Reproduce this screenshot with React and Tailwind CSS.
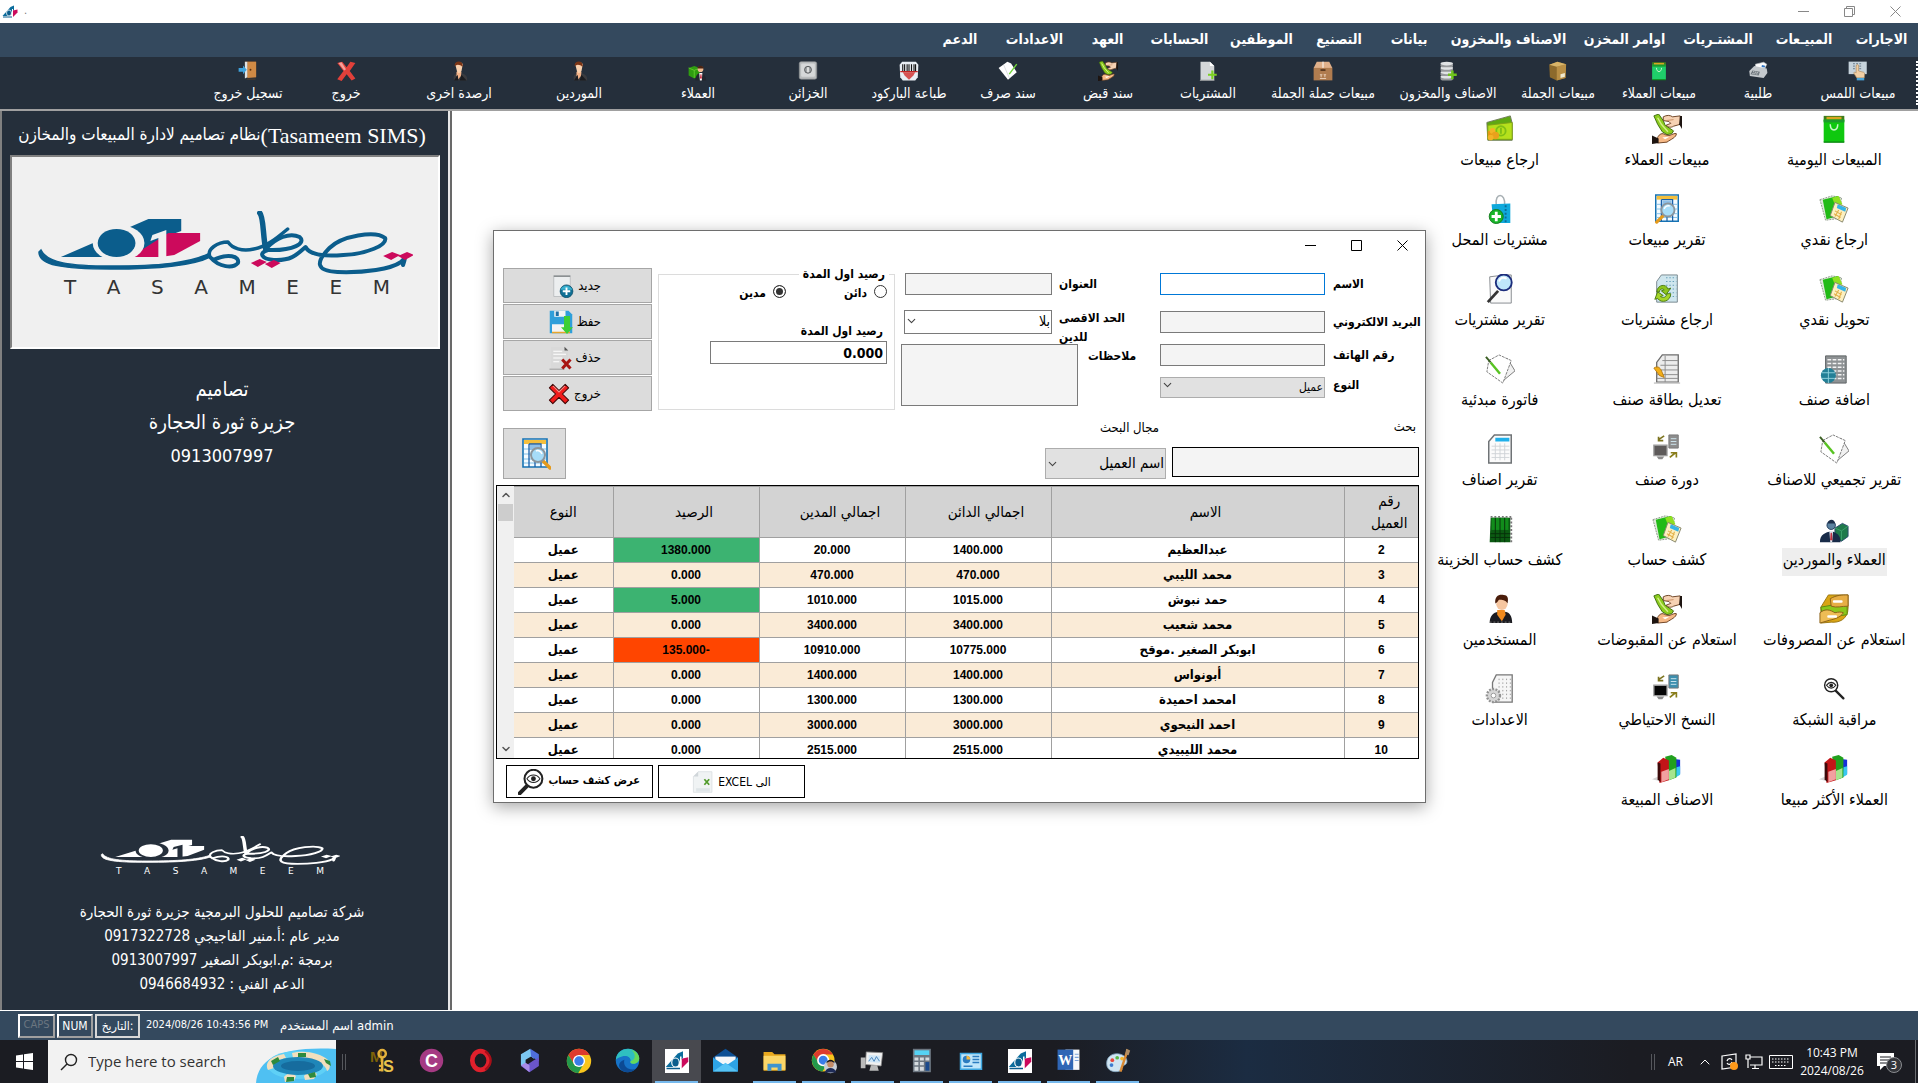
import React, { useState } from 'react';
import { ChevronDown, ChevronUp } from 'lucide-react';

const MENU = [
  { label: 'الاجارات', width: 'w-[73px]' },
  { label: 'المبيـعات', width: 'w-[82px]' },
  { label: 'المشتـريات', width: 'w-[90px]' },
  { label: 'اوامر المخزن', width: 'w-[97px]' },
  { label: 'الاصناف والمخزون', width: 'w-[135px]' },
  { label: 'بيانات', width: 'w-[64px]' },
  { label: 'التصنيع', width: 'w-[76px]' },
  { label: 'الموظفين', width: 'w-[79px]' },
  { label: 'الحسابات', width: 'w-[85px]' },
  { label: 'العهد', width: 'w-[59px]' },
  { label: 'الاعدادات', width: 'w-[87px]' },
  { label: 'الدعم', width: 'w-[62px]' },
];

const CUSTOMERS = [
  { id: 2, name: 'عبدالعظيم', credit: '1400.000', debit: '20.000', balance: '1380.000' },
  { id: 3, name: 'محمد الليبي', credit: '470.000', debit: '470.000', balance: '0.000' },
  { id: 4, name: 'حمد نبوش', credit: '1015.000', debit: '1010.000', balance: '5.000' },
  { id: 5, name: 'محمد شعيب', credit: '3400.000', debit: '3400.000', balance: '0.000' },
  { id: 6, name: 'ابوبكر الصغير .موقح', credit: '10775.000', debit: '10910.000', balance: '-135.000' },
  { id: 7, name: 'أبونواس', credit: '1400.000', debit: '1400.000', balance: '0.000' },
  { id: 8, name: 'امحمد احميدة', credit: '1300.000', debit: '1300.000', balance: '0.000' },
  { id: 9, name: 'احمد النيحوي', credit: '3000.000', debit: '3000.000', balance: '0.000' },
  { id: 10, name: 'محمد الليبيدي', credit: '2515.000', debit: '2515.000', balance: '0.000' },
];

/* ---------- icons ---------- */

const Svg = ({ size = 30, children }) => (
  <svg width={size} height={size} viewBox="0 0 32 32" aria-hidden="true" className="shrink-0">{children}</svg>
);

const Bag = ({ size, color = '#0fc80f' }) => (
  <Svg size={size}>
    <path d="M5 2h22v6H5z" fill="#3f7d1c" />
    <path d="M8 3h16v3H8z" fill="#d9a520" />
    <path d="M5 6h22v24H5z" fill={color} />
    <path d="M5 6h22v3H5z" fill="#1c9b2c" />
    <path d="M12 11c0 8 8 8 8 0" fill="none" stroke="#c9f5c9" strokeWidth="1.6" />
    <path d="M5 30h22" stroke="#0b8a12" strokeWidth="1.5" />
  </Svg>
);

const Hands = ({ size }) => (
  <Svg size={size}>
    <path d="M2 2l5-2 5 7 2 5 9 6-2 3-5 1-5-3-5-8z" fill="#8ccc1e" stroke="#3d6b10" />
    <path d="M6 4l4 7 7 8" stroke="#d6f08a" strokeWidth="1.5" fill="none" />
    <path d="M12 3c4-2 7-2 10 0l8-1v9l-7 2c-3 2-6 1-8-1l5-2-2-2-6-1z" fill="#f6d2b4" stroke="#6a3f20" />
    <path d="M15 7l8-1" stroke="#c98d60" />
    <path d="M30 2h2v14l-3-5z" fill="#1d1410" />
    <path d="M6 25c2-4 5-5 8-3l4 1c4-1 6-3 8-2 0 4-6 6-10 9l-10 1z" fill="#f6b986" stroke="#6a3f20" />
    <path d="M11 25l8-1-5 3z" fill="#fff" />
    <path d="M0 23l7 3v5l-7 1z" fill="#1d1410" />
  </Svg>
);

const Cash = () => (
  <Svg>
    <path d="M2 9L27 2l2 8v18H3z" fill="#5fa812" stroke="#6d7a55" />
    <path d="M3 12l26-3v18H3z" fill="#b5e01c" stroke="#7da018" />
    <circle cx="17" cy="18" r="5" fill="none" stroke="#7fbf15" strokeWidth="2" />
    <path d="M17 15v6" stroke="#7fbf15" strokeWidth="2" />
    <path d="M3 18h5v9H3z" fill="#e69a12" />
    <circle cx="8" cy="18" r="3" fill="#f2b426" />
    <circle cx="11" cy="23" r="4" fill="#e9a11d" />
    <circle cx="6" cy="25" r="3" fill="#f2b426" />
  </Svg>
);

const FoldersCalc = () => (
  <Svg>
    <path d="M1 6L14 2l10 2-3 22-14 2z" fill="#dfe8da" stroke="#8b9688" strokeDasharray="2 1" />
    <path d="M4 6l16-4 3 6-8 17-7 2z" fill="#21bb16" />
    <path d="M14 4l7-2 4 9-7 3z" fill="#8fe021" />
    <path d="M17 9l14 6-6 15-13-7z" fill="#fdf0c0" stroke="#85856c" />
    <path d="M20 11l9 4-1 4-9-4z" fill="#35b4e8" />
    <path d="M17 18l7 4M16 21l7 4M21 17l-4 7M24 19l-3 8" stroke="#e2b04a" strokeWidth="1.2" />
  </Svg>
);

const BagPlus = () => (
  <Svg>
    <path d="M12 12C10-2 22-2 21 12" fill="none" stroke="#a8b0b4" strokeWidth="1.6" />
    <path d="M7 11l20-1v21H9z" fill="#10a9dc" />
    <path d="M22 12v18" stroke="#0a6d99" strokeWidth="2" strokeDasharray="2 2" />
    <circle cx="12" cy="24" r="7.5" fill="#17b528" stroke="#127a1c" />
    <path d="M12 19v10M7 24h10" stroke="#fff" strokeWidth="3" />
  </Svg>
);

const TableSearch = ({ size, flip }) => (
  <Svg size={size}>
    <path d="M4 1h24v28H4z" fill="#f4fbff" stroke="#1673b4" strokeWidth="1.6" />
    <path d="M5 2h22v4H5z" fill="#f4bf3c" />
    <path d="M5 11h22M5 16h22M5 21h22M5 25h22" stroke="#7fc0e8" />
    <path d="M10 6h12v23M10 6v23M16 22v7" fill="none" stroke="#1a5fa8" strokeWidth="1.3" />
    <path d="M11 7h10v5H11z" fill="#8dbfe8" />
    <g transform={flip ? 'translate(36 0) scale(-1 1)' : undefined}>
      <path d="M12 23l-7 7" stroke="#e59a1c" strokeWidth="3.4" strokeLinecap="round" />
      <circle cx="17" cy="17" r="7" fill="#a6dcf8" stroke="#8b959c" strokeWidth="2" />
      <path d="M13 16c1-3 4-4 6-3" stroke="#fff" strokeWidth="1.5" fill="none" />
    </g>
  </Svg>
);

const PageSearch = () => (
  <Svg>
    <path d="M5 3l16-2h7v30H6z" fill="#fafafa" stroke="#83888c" />
    <path d="M14 18L3 30" stroke="#333" strokeWidth="3" />
    <circle cx="20" cy="9" r="8.5" fill="#bfe7fb" stroke="#1c2d7c" strokeWidth="2" />
    <path d="M15 8c1-4 5-5 8-3" stroke="#fff" strokeWidth="2" fill="none" />
  </Svg>
);

const PageRecycle = () => (
  <Svg>
    <path d="M10 1h17v29H5V8z" fill="#cfe6ee" stroke="#76858c" />
    <path d="M15 4h11M15 8h11M15 12h11M15 16h11M15 20h11M15 24h11" stroke="#5e9ab4" strokeDasharray="1.5 2" />
    <path d="M5 19c1-8 10-9 12-3l3-1-5 7-5-4 3-1c-2-2-5-1-5 2z" fill="#8cc51d" stroke="#4b7b11" />
    <path d="M20 21c0 8-10 11-14 5l-3 1 3-8 6 4-3 1c3 2 6 1 7-3z" fill="#a5d528" stroke="#4b7b11" />
  </Svg>
);

const NotesPen = ({ size }) => (
  <Svg size={size}>
    <path d="M13 8l11-3 8 13-12 10z" fill="#f1f1f1" stroke="#777" />
    <path d="M4 7l11-6 13 6-9 24L2 19z" fill="#fff" stroke="#777" strokeDasharray="3 1" />
    <path d="M6 9l10 12" stroke="#58c322" strokeWidth="2.6" />
    <path d="M1 3l5 6" stroke="#3b5f23" strokeWidth="2" />
  </Svg>
);

const NotesPenWhite = ({ size }) => (
  <Svg size={size}>
    <path d="M1 11L15 1l6 3 9 14-14 12z" fill="#fff" />
    <path d="M9 6l9 21" stroke="#c9cdd1" />
    <path d="M30 5L18 21" stroke="#6fd53a" strokeWidth="2.2" />
  </Svg>
);

const SheetGlobe = () => (
  <Svg>
    <path d="M7 2h22v29H7z" fill="#8e9294" stroke="#5c6062" />
    <path d="M9 6h18M9 10h18M9 14h18M9 18h18M9 22h18M9 26h18" stroke="#f4f4f4" strokeWidth="1.6" strokeDasharray="4 1.5" />
    <circle cx="10" cy="23" r="8" fill="#237f96" />
    <path d="M3 20h14M3 26h14M10 15v16" stroke="#8fd0dd" />
  </Svg>
);

const SheetEdit = () => (
  <Svg>
    <path d="M11 1h17v29H5V9z" fill="#ececec" stroke="#6d6d6d" strokeWidth="1.4" />
    <path d="M11 7h17M9 12h19M5 17h23M5 22h23M5 26h23M14 2v28" stroke="#8a8a8a" />
    <path d="M2 15c5-3 7 0 9 5l2 5-5-2z" fill="#f3ae17" stroke="#b57a10" />
    <path d="M2 31h28" stroke="#c4c4c4" strokeWidth="1.5" />
  </Svg>
);

const Network = ({ panel = '#8d8d8d', screen = '#5d5a5a' }) => (
  <Svg>
    <path d="M18 1h10v14H18z" fill={panel} stroke="#777" />
    <path d="M20 5h6M20 8h6M20 11h6" stroke="#cfe8f0" />
    <path d="M2 12h14v11H2z" fill={screen} stroke="#9b9b9b" strokeWidth="1.4" />
    <path d="M5 24h8l-2 3H7z" fill="#8b8b8b" />
    <path d="M13 2L7 6M7 3v4h5" stroke="#7d7420" strokeWidth="1.8" fill="none" />
    <path d="M19 25l6-5M20 20h6v5" stroke="#8a7e1c" strokeWidth="1.8" fill="none" />
  </Svg>
);

const ReportSheet = () => (
  <Svg>
    <path d="M10 1h18v30H4V8z" fill="#fbfbfb" stroke="#6f7376" strokeWidth="1.6" />
    <path d="M11 4h15v4H11z" fill="#20b0ea" />
    <path d="M7 13h19M7 17h19M7 21h19M7 25h19M11 10v18M16 10v18M21 10v18" stroke="#cfd3d6" />
  </Svg>
);

const GreenBook = () => (
  <Svg>
    <path d="M6 4h21v26H5z" fill="#0b5a12" />
    <path d="M7 4h18v13H7z" fill="#118c1b" />
    <path d="M6 21h21M6 25h21M11 4v26M16 4v26M21 4v26" stroke="#06300a" />
    <path d="M6 3h22M28 4v26" stroke="#777" strokeWidth="2" strokeDasharray="2 2" />
  </Svg>
);

const CustomerBox = ({ size }) => (
  <Svg size={size}>
    <path d="M17 15l8-5 6 3v11l-7 5-7-4z" fill="#1f7a4b" stroke="#274a6d" />
    <path d="M17 15l7 3 7-5M24 18v10" stroke="#3ca06b" fill="none" />
    <circle cx="13" cy="12" r="4.5" fill="#5b82a0" stroke="#1e3a5c" />
    <path d="M9 10c1-5 8-5 8 0z" fill="#1c2f4b" />
    <path d="M1 30c0-9 6-10 12-12 6 2 10 4 10 12z" fill="#182b48" />
    <path d="M11 18h4l-1 12h-2z" fill="#dfe6ee" />
    <path d="M12.400 20h1.400l.6 8h-2.600z" fill="#c03040" />
  </Svg>
);

const GreenCustomer = ({ size }) => (
  <Svg size={size}>
    <path d="M1 11l9-3 9 3v12l-9 5-9-5z" fill="#2f9d10" />
    <path d="M1 11l9 4 9-4M10 15v12" stroke="#76dc3c" fill="none" />
    <circle cx="20" cy="13" r="4.500" fill="#f0bb92" />
    <path d="M15 12c0-6 10-6 10 0z" fill="#4a2412" />
    <path d="M12 31c0-9 4-12 8-12s9 4 9 12z" fill="#23262e" />
    <path d="M18 19h5l-1 12h-3z" fill="#fff" />
    <path d="M20 21h1.400l.8 7h-3z" fill="#c2182c" />
  </Svg>
);

const Person = ({ size }) => (
  <Svg size={size}>
    <path d="M5 31c0-8 4-11 9-12l4 3 4-3c4 1 7 4 7 12z" fill="#1b1b20" />
    <path d="M13 17h8l1 5-4 7-5-7z" fill="#f08a1e" />
    <circle cx="18" cy="11" r="6" fill="#f6c6a0" />
    <path d="M11 10C10 2 15 0 20 1c5 0 5 5 4 9-2-4-6-4-9-4-1 1-2 3-4 4z" fill="#4a1d0b" />
    <path d="M5 30h24" stroke="#777" strokeDasharray="2 2" />
  </Svg>
);

const SuitPerson = ({ size }) => (
  <Svg size={size}>
    <path d="M8 31c-2-7 1-10 5-11h8c5 1 9 5 8 11z" fill="#3a3b3f" />
    <path d="M12 17h8l-1 7-4 5-3-6z" fill="#f3b48a" />
    <path d="M10 5c2-4 10-4 12 0l-2 11c-2 4-5 4-7 1z" fill="#f9d1ae" />
    <path d="M9 8c-1-9 13-10 13-1l-1 2c-2-3-8-4-10-2z" fill="#7a3415" />
    <path d="M8 31l6-9 1 9zM28 31l-8-9-3 9z" fill="#1b1c20" />
  </Svg>
);

const MoneyRing = () => (
  <Svg>
    <path d="M10 1h21v14c0 12-10 16-18 15L2 31V14z" fill="#d9a514" stroke="#9a7410" />
    <path d="M2 14l28-5v13L4 26z" fill="#8cc71c" stroke="#5a8a10" />
    <path d="M12 5c7-4 12-4 19-4v12c-7 0-12 2-18 0z" fill="#e7ae45" stroke="#8a5f17" />
    <path d="M1 20c6-5 11-3 16 0 4-1 7-1 9 0-3 5-10 7-15 8l-10 3z" fill="#eebc55" stroke="#8a5f17" />
    <path d="M16 8h8M10 24h8" stroke="#fff" strokeWidth="2.500" strokeLinecap="round" />
  </Svg>
);

const GearSheet = () => (
  <Svg>
    <path d="M12 1h17v29H8V9z" fill="#f6f6f6" stroke="#777" strokeWidth="1.400" />
    <path d="M15 5v24M19 5v24M23 5v24M27 5v24" stroke="#9a9a9a" strokeDasharray="1.500 2.500" />
    <circle cx="9" cy="23" r="7" fill="#d6d6d6" stroke="#929292" strokeWidth="2.500" strokeDasharray="2 1.500" />
    <circle cx="9" cy="23" r="2.500" fill="#fff" stroke="#999" />
  </Svg>
);

const EyeSearch = ({ size, heavy }) => (
  <Svg size={size}>
    <g transform={heavy ? 'translate(32 0) scale(-1 1)' : undefined}>
      <path d={heavy ? 'M19 19l11 11' : 'M18 18l8 8'} stroke="#222" strokeWidth={heavy ? 5 : 2.500} strokeLinecap="round" />
      <circle cx="13" cy="12" r={heavy ? 11 : 7} fill="#fff" stroke="#222" strokeWidth={heavy ? 2.500 : 1.500} />
      <path d={heavy ? 'M5 12c4-6 12-6 16 0-4 6-12 6-16 0z' : 'M8 12c3-4 7-4 10 0-3 4-7 4-10 0z'} fill="#fff" stroke="#222" strokeWidth="1.300" />
      <circle cx="13" cy="12" r={heavy ? 3 : 2} fill="#222" />
    </g>
  </Svg>
);

const Books = () => (
  <Svg>
    <path d="M0 27l9-4v6z" fill="#d5d5d5" />
    <path d="M22 5l8 1v15l-6 4z" fill="#1530d8" />
    <path d="M26 14l4-1v9l-5 3z" fill="#38c8f0" />
    <path d="M14 3l7-2 5 3v21l-8 3z" fill="#21a01e" />
    <path d="M18 18l7-3v10l-7 3z" fill="#a6e58e" />
    <path d="M6 9l6-5 6 3v21l-10 3z" fill="#c21518" />
    <path d="M6 9l3 1v20l-3-3z" fill="#3c0a0a" />
    <path d="M10 19l8-3v11l-8 3z" fill="#f2a0a0" />
  </Svg>
);

const TouchHand = ({ size }) => (
  <Svg size={size}>
    <path d="M1 1h29v20H1z" fill="#c6d3dc" />
    <path d="M8 4h14M8 8h14M8 12h14" stroke="#7d8e9b" strokeWidth="2" strokeDasharray="3 2" />
    <path d="M13 8c0-3 4-3 4 0v8l8 2c2 1 2 3 1 9H14l-5-8c1-2 3-1 4 0z" fill="#f2cfa4" stroke="#a88559" />
    <path d="M14 27h12v4H14z" fill="#4ba5d8" />
  </Svg>
);

const Fax = ({ size }) => (
  <Svg size={size}>
    <path d="M12 5l13-3 5 3-4 9-14-2z" fill="#fdfdfd" stroke="#bcc0c4" />
    <path d="M2 16L10 8l20 4 1 7-6 8-22-3z" fill="#c4c9cd" />
    <path d="M7 15l12 2-2 6-13-2z" fill="#6d767d" />
    <path d="M8 17l9 2M7 20l9 1" stroke="#fff" strokeDasharray="2 1" />
    <path d="M22 8l5 1" stroke="#2d74c4" strokeWidth="3" />
  </Svg>
);

const BrownBox = ({ size }) => (
  <Svg size={size}>
    <path d="M2 6L15 1l14 4-1 22-14 4L3 26z" fill="#8d6a2c" />
    <path d="M14 9l15-4-1 22-14 4z" fill="#b98f45" />
    <path d="M2 6l12 3 15-4L15 1z" fill="#d8b468" />
    <path d="M20 21l7-2v6l-7 2z" fill="#f0ead0" />
  </Svg>
);

const Carton = ({ size }) => (
  <Svg size={size}>
    <path d="M6 1h20l5 10H1z" fill="#e0b08a" />
    <path d="M1 11h30v20H1z" fill="#b07c4f" />
    <path d="M16 1v10" stroke="#fff" strokeWidth="1.500" />
    <path d="M12 13h8v3h-8z" fill="#5b3a20" />
    <path d="M11 28h10M13 22v4M19 22v4M11 22h4M17 22h4" stroke="#f1dcc8" strokeWidth="1.300" />
  </Svg>
);

const DbPlus = ({ size }) => (
  <Svg size={size}>
    {[27, 20, 13, 6].map(y => (
      <g key={y}>
        <rect x="4" y={y - 3} width="20" height="7" rx="3" fill="#96999c" />
        <ellipse cx="14" cy={y - 2} rx="10" ry="3" fill="#e0e3e5" />
      </g>
    ))}
    <path d="M23 15v14M16 22h14" stroke="#6fc41c" strokeWidth="4" />
  </Svg>
);

const PagePlus = ({ size }) => (
  <Svg size={size}>
    <path d="M4 1h15l7 7v23H4z" fill="#d4d7d9" />
    <path d="M19 1l7 7h-7z" fill="#fff" />
    <path d="M23 15v14M16 22h14" stroke="#7bd021" strokeWidth="3.500" />
    <path d="M3 31h23" stroke="#8d9194" strokeWidth="2" />
  </Svg>
);

const Barcode = ({ size }) => (
  <Svg size={size}>
    <path d="M5 1h22l4 5-1 20-4 5H6l-4-5L1 6z" fill="#e9eef4" />
    <path d="M6 5v12M9 5v12M13 5v12M16 5v12M20 5v12M24 5v12M26.500 5v12" stroke="#151515" strokeWidth="1.800" />
    <path d="M6 18h20l-3 5-7 7-7-7z" fill="#d65252" />
    <path d="M2 17h28" stroke="#c22424" strokeWidth="2" />
  </Svg>
);

const Safe = ({ size }) => (
  <Svg size={size}>
    <rect x="2" y="1" width="28" height="28" rx="3" fill="#b9bcbd" stroke="#85898b" />
    <rect x="5" y="4" width="22" height="21" rx="2" fill="#d6d8d9" />
    <circle cx="16" cy="14" r="5.500" fill="#9fa3a5" stroke="#55595b" strokeWidth="1.500" />
    <path d="M16 10v8" stroke="#eee" strokeWidth="2.500" />
  </Svg>
);

const RedX = ({ size, color = '#e33b34', edge = '#a31410' }) => (
  <Svg size={size}>
    <path d="M7 2l9 9 9-9 5 5-9 9 9 9-5 5-9-9-9 9-5-5 9-9-9-9z" fill={color} stroke={edge} strokeWidth="1.500" strokeLinejoin="round" />
    <path d="M7 4l9 9 9-9" stroke="#f6908a" strokeWidth="1.500" fill="none" />
  </Svg>
);

/* taller, tilted cross of the toolbar */
const ExitX = ({ size }) => (
  <Svg size={size}>
    <path d="M2 3l8-2 7 9 6-9 8 2-9 13 9 12-6 3-8-10-8 11-7-3 10-13z" fill="#e2403a" />
    <path d="M4 3l5-1 7 11-3 2z" fill="#f4a09a" />
  </Svg>
);

const Door = ({ size }) => (
  <Svg size={size}>
    <path d="M11 1h18v25H11z" fill="#8c4e1d" />
    <path d="M15 1h14v25l-14 1z" fill="#d08a45" />
    <path d="M11 1h4v25l-4 2z" fill="#dfe4e6" />
    <circle cx="20" cy="14" r="1.500" fill="#5b3010" />
    <path d="M1 11h7V7l6 7-6 7v-4H1z" fill="#3fa2dc" />
    <path d="M14 29h14" stroke="#4b3b2d" strokeWidth="2" />
  </Svg>
);

const NewPage = ({ size }) => (
  <Svg size={size}>
    <path d="M5 2h22v28H5z" fill="#eceeef" stroke="#b3b6b8" />
    <path d="M5 2h22v2H5z" fill="#8c9092" />
    <circle cx="22" cy="23" r="8.500" fill="#0f6f94" stroke="#0a4a66" />
    <path d="M14 21c2-6 12-8 16 0z" fill="#39b0cf" />
    <path d="M22 18v10M17 23h10" stroke="#fff" strokeWidth="2.500" />
  </Svg>
);

const Floppy = ({ size }) => (
  <Svg size={size}>
    <path d="M1 1h25l5 5v25H1z" fill="#2f9fda" />
    <path d="M7 1h15v8H7z" fill="#f4f4f4" />
    <path d="M9 2h4v6H9z" fill="#1d6fa5" />
    <path d="M4 19h23v11H4z" fill="#f4f4f4" />
    <path d="M4 29h24v2H4z" fill="#e8a52b" />
    <path d="M20 8h8v15h4l-8 9-8-9h4z" fill="#3ccf35" />
  </Svg>
);

const DeletePage = ({ size }) => (
  <Svg size={size}>
    <path d="M4 1h18l5 5v24H4z" fill="#d9d9d9" />
    <path d="M22 1l5 5h-5z" fill="#555" />
    <path d="M7 7h12M7 11h17M7 16h12M7 21h8" stroke="#fff" strokeWidth="1.500" />
    <path d="M2 31h20" stroke="#b0b0b0" strokeWidth="2" />
    <path d="M19 18l11 12M30 18L19 30" stroke="#a81512" strokeWidth="4" />
  </Svg>
);

const ExcelPage = ({ size }) => (
  <Svg size={size}>
    <path d="M9 1h20v30H2V8z" fill="#f0f3f4" stroke="#d5dadd" />
    <path d="M9 1v7H2z" fill="#d0d6d9" />
    <path d="M18 12l7 8M25 12l-7 8" stroke="#4f9a28" strokeWidth="2.500" />
    <path d="M6 25h20v5H6z" fill="#dfe5e8" />
  </Svg>
);

/* company mark: calligraphy over the 01 block */
const LogoMark = ({ mono, className }) => {
  const blue = mono || '#0b5d8c';
  const pink = mono || '#cc0a5c';
  const gap = mono ? '#252f3b' : '#f0f0f0';
  return (
    <svg viewBox="0 0 378 66" preserveAspectRatio="none" className={className} aria-hidden="true">
      <path d="M24 46L112 8h33v12l-22 8-18 18z" fill={blue} />
      <path d="M94 46l38-24h32v8l-26 14-14 2z" fill={pink} />
      <ellipse cx="82" cy="32" rx="26" ry="18" fill={gap} />
      <ellipse cx="80" cy="32" rx="19" ry="14" fill={blue} />
      <path d="M116 24l14-5v27h-8V27l-8 3z" fill={gap} />
      <path d="M2 41C2 54 24 58 74 58c52 0 84-4 100-12l-2-3c-20 9-48 12-98 12C34 55 10 52 4 39z" fill={blue} stroke={blue} strokeWidth="1.500" />
      <g fill="none" stroke={blue} strokeWidth="4" strokeLinecap="round" strokeLinejoin="round">
        <path d="M174 46c-4-8 8-15 18-15 4 6 14 10 26 7 12-2 22-10 34-20" strokeWidth="3.500" />
        <path d="M175 47c8 9 22 11 27 5 2-7-10-10-25-3" />
        <path d="M224 2c4 4 3 24 6 36" strokeWidth="5.500" />
        <path d="M230 38c10-11 24-17 34-12 7 6-6 14-32 13-10 3-6 9 6 10 18 1 24-6 32-13 3 6 14 10 38 8 24-1 44-10 42-17-10-8-44-2-56 10-14 14-14 23 8 24 28 1 54-3 64-10 4-4 5-6 2 3" />
      </g>
      <path d="M215 52l9-4 7 3-9 5zM229 53l9-4 7 3-9 5zM348 45l9-4 8 3-9 5zM363 45l9-4 7 3-9 5z" fill={pink} />
    </svg>
  );
};

const Letters = ({ className }) => (
  <div dir="ltr" className={`flex justify-between ${className}`}>
    {'TASAMEEM'.split('').map((ch, i) => <span key={i}>{ch}</span>)}
  </div>
);

const AppBadge = ({ size = 24 }) => (
  <Svg size={size}>
    <path d="M0 0h32v32H0z" fill="#fff" />
    <path d="M1 24l16-18 7-3v9l-12 12z" fill="#0b6c9c" />
    <ellipse cx="14" cy="18" rx="5" ry="6" fill="#0b5d8c" stroke="#fff" strokeWidth="1.500" />
    <path d="M22 13l9-2v6l-6 6-3 3z" fill="#cc0a5c" />
    <path d="M21 10v16" stroke="#fff" strokeWidth="2" />
    <path d="M2 26h18" stroke="#0b5d8c" strokeWidth="2" />
  </Svg>
);

const TOOLBAR = [
  { label: 'مبيعات اللمس', width: 'w-[106px]', icon: TouchHand },
  { label: 'طلبية', width: 'w-[94px]', icon: Fax },
  { label: 'مبيعات العملاء', width: 'w-[104px]', icon: props => <Bag {...props} color="#1fce6a" /> },
  { label: 'مبيعات الجملة', width: 'w-[98px]', icon: BrownBox },
  { label: 'الاصناف والمخزون', width: 'w-[122px]', icon: DbPlus },
  { label: 'مبيعات جملة الجملة', width: 'w-[128px]', icon: Carton },
  { label: 'المشتريات', width: 'w-[102px]', icon: PagePlus },
  { label: 'سند قبض', width: 'w-[98px]', icon: Hands },
  { label: 'سند صرف', width: 'w-[102px]', icon: NotesPenWhite },
  { label: 'طباعة الباركود', width: 'w-[96px]', icon: Barcode },
  { label: 'الخزائن', width: 'w-[106px]', icon: Safe },
  { label: 'العملاء', width: 'w-[114px]', icon: GreenCustomer },
  { label: 'الموردين', width: 'w-[124px]', icon: SuitPerson },
  { label: 'ارصدة اخرى', width: 'w-[116px]', icon: SuitPerson },
  { label: 'خروج', width: 'w-[110px]', icon: ExitX },
  { label: 'تسجيل خروج', width: 'w-[86px]', icon: Door },
];

const SHORTCUTS = [
  { label: 'المبيعات اليومية', icon: <Bag /> },
  { label: 'مبيعات العملاء', icon: <Hands /> },
  { label: 'ارجاع مبيعات', icon: <Cash /> },
  { label: 'ارجاع نقدي', icon: <FoldersCalc /> },
  { label: 'تقرير مبيعات', icon: <TableSearch /> },
  { label: 'مشتريات المحل', icon: <BagPlus /> },
  { label: 'تحويل نقدي', icon: <FoldersCalc /> },
  { label: 'ارجاع مشتريات', icon: <PageRecycle /> },
  { label: 'تقرير مشتريات', icon: <PageSearch /> },
  { label: 'اضافة صنف', icon: <SheetGlobe /> },
  { label: 'تعديل بطاقة صنف', icon: <SheetEdit /> },
  { label: 'فاتورة مبدئية', icon: <NotesPen /> },
  { label: 'تقرير تجميعي للاصناف', icon: <NotesPen /> },
  { label: 'دورة صنف', icon: <Network /> },
  { label: 'تقرير اصناف', icon: <ReportSheet /> },
  { label: 'العملاء والموردين', icon: <CustomerBox />, active: true },
  { label: 'كشف حساب', icon: <FoldersCalc /> },
  { label: 'كشف حساب الخزينة', icon: <GreenBook /> },
  { label: 'استعلام عن المصروفات', icon: <MoneyRing /> },
  { label: 'استعلام عن المقبوضات', icon: <Hands /> },
  { label: 'المستخدمين', icon: <Person /> },
  { label: 'مراقبة الشبكة', icon: <EyeSearch /> },
  { label: 'النسخ الاحتياطي', icon: <Network panel="#3d8fae" screen="#050505" /> },
  { label: 'الاعدادات', icon: <GearSheet /> },
  { label: 'العملاء الأكثر مبيعا', icon: <Books /> },
  { label: 'الاصناف المبيعة', icon: <Books /> },
];

/* ---------- window pieces ---------- */

const WindowButtons = ({ restore, className }) => (
  <div dir="ltr" className={`flex justify-end ${className}`}>
    <button type="button" aria-label="تصغير" className="w-[46px] flex justify-center items-center">
      <svg width="11" height="11" viewBox="0 0 11 11" stroke="currentColor"><path d="M0 5.500h11" /></svg>
    </button>
    <button type="button" aria-label="تكبير" className="w-[46px] flex justify-center items-center">
      <svg width="11" height="11" viewBox="0 0 11 11" fill="none" stroke="currentColor">
        {restore ? <path d="M.5 2.500h8v8h-8zM2.500 2.500v-2h8v8h-2" /> : <path d="M.5.5h10v10H.5z" />}
      </svg>
    </button>
    <button type="button" aria-label="اغلاق" className="w-[46px] flex justify-center items-center">
      <svg width="11" height="11" viewBox="0 0 11 11" stroke="currentColor"><path d="M.5.5l10 10M10.500.5l-10 10" /></svg>
    </button>
  </div>
);

const Combo = ({ id, value, options, className, selectClass }) => (
  <div className={`relative ${className}`}>
    <select id={id} defaultValue={value} className={`appearance-none w-full h-full border px-px outline-none ${selectClass}`}>
      {options.map(o => <option key={o}>{o}</option>)}
    </select>
    <ChevronDown size={13} strokeWidth={2} className="absolute left-px top-1/2 -translate-y-1/2 text-[#444] pointer-events-none" />
  </div>
);

const Sidebar = () => (
  <aside className="w-[450px] shrink-0 bg-[#252f3b] text-white border-l-2 border-[#808080] border-r-2 border-r-[#e8e8e8] flex flex-col items-center">
    <h1 dir="ltr" className="mt-[6px] h-9 mr-[6px] flex items-center text-[22px] whitespace-nowrap font-['Liberation_Serif','DejaVu_Sans_Condensed',serif]">
      <span dir="rtl" className="text-[17px] font-['DejaVu_Sans_Condensed','DejaVu_Sans',sans-serif]">نظام تصاميم لادارة المبيعات والمخازن</span>
      <span>(Tasameem SIMS)</span>
    </h1>
    <div className="mt-[2px] w-[430px] h-[194px] bg-[#f0f0f0] border-2 border-t-[#808080] border-l-[#808080] border-b-white border-r-white flex flex-col items-center pt-[54px]">
      <LogoMark className="w-[376px] h-[66px]" />
      <Letters className="w-[326px] ml-1 text-[20px] leading-5 text-[#333] font-['DejaVu_Sans',sans-serif]" />
    </div>
    <div className="mt-6 mr-[6px] text-center text-[20px] leading-[33px]">
      <p>تصاميم</p>
      <p>جزيرة ثورة الحجارة</p>
      <p className="text-[18px] leading-[33px]">0913007997</p>
    </div>
    <div className="mt-auto mr-[10px] flex flex-col items-center">
      <LogoMark mono="#ffffff" className="w-[240px] h-[30px]" />
      <Letters className="w-[208px] text-[9px] leading-[10px] font-['DejaVu_Sans',sans-serif]" />
    </div>
    <div className="mt-6 mr-[6px] mb-[14px] text-center text-[15px] leading-6">
      <p>شركة تصاميم للحلول البرمجية جزيرة ثورة الحجارة</p>
      <p>مدير عام :أ.منير القاجيجي 0917322728</p>
      <p>برمجة :م.ابوبكر الصغير 0913007997</p>
      <p>الدعم الفني : 0946684932</p>
    </div>
  </aside>
);

const field = 'border border-[#7a7a7a] bg-[#f4f4f4] outline-none px-1 text-[13px]';
const fieldLabel = 'shrink-0 text-left text-[12px] font-bold whitespace-nowrap';
const actionButton = 'h-[35px] w-[149px] bg-[#dcdcdc] border border-[#a6a6a6] flex items-center text-[13px] pr-[50px] gap-1';
const th = 'border-l border-[#a0a0a0] pl-4 font-normal text-[15px] leading-[22px]';
const amount = "border-l border-[#a0a0a0] text-[12px] font-['Liberation_Sans',sans-serif]";

const balanceColor = (value) => {
  if (parseFloat(value) > 0) return 'bg-[#3cb371]';
  if (parseFloat(value) < 0) return 'bg-[#ff4500]';
  return '';
};

const CustomersDialog = () => {
  const [side, setSide] = useState('debit');

  return (
    <section className="absolute left-[41px] top-[119px] w-[933px] bg-white border border-[#6e6e6e] shadow-[0_4px_16px_rgba(0,0,0,0.35)]">
      <WindowButtons className="h-[29px] text-black" />

      <form className="mt-2 pl-[9px] flex">
        {/* contact details */}
        <div className="w-[265px] pt-[5px] ml-2">
          <div className="flex items-center gap-2">
            <label htmlFor="name" className={`w-[92px] ${fieldLabel}`}>الاسم</label>
            <input id="name" className="w-[165px] h-[22px] border border-[#0078d7] bg-white outline-none px-1 text-[13px]" />
          </div>
          <div className="flex items-center gap-2 mt-4">
            <label htmlFor="email" className={`w-[92px] ${fieldLabel}`}>البريد الالكتروني</label>
            <input id="email" className={`w-[165px] h-[22px] ${field}`} />
          </div>
          <div className="flex items-center gap-2 mt-[11px]">
            <label htmlFor="phone" className={`w-[92px] ${fieldLabel}`}>رقم الهاتف</label>
            <input id="phone" className={`w-[165px] h-[22px] ${field}`} />
          </div>
          <div className="flex items-center gap-2 mt-2">
            <label htmlFor="kind" className={`w-[92px] ${fieldLabel}`}>النوع</label>
            <Combo id="kind" value="عميل" options={['عميل', 'مورد']} className="w-[165px] h-[21px]" selectClass="bg-[#e1e1e1] border-[#adadad] text-[12px]" />
          </div>
        </div>

        {/* address, limit and notes */}
        <div className="w-[251px] pt-[5px] ml-[6px]">
          <div className="flex items-center gap-[7px]">
            <label htmlFor="address" className={`w-[93px] ${fieldLabel}`}>العنوان</label>
            <input id="address" className={`w-[147px] h-[22px] ${field}`} />
          </div>
          <div className="flex items-start gap-[7px] mt-[14px]">
            <label htmlFor="limit" className={`w-[93px] h-[35px] leading-[19px] ${fieldLabel}`}>الحد الاقصى<br />للدين</label>
            <Combo id="limit" value="بلا" options={['بلا']} className="w-[148px] h-6" selectClass="bg-white border-[#7a7a7a] text-[14px]" />
          </div>
          <div className="flex items-start gap-[10px]">
            <label htmlFor="notes" className={`w-[64px] leading-6 ${fieldLabel}`}>ملاحظات</label>
            <textarea id="notes" className={`w-[177px] h-[62px] resize-none ${field}`} />
          </div>
        </div>

        {/* opening balance */}
        <fieldset className="w-[237px] h-[142px] ml-[6px] border border-[#dcdcdc]">
          <legend className="mr-[5px] px-1 text-[12px] leading-3 font-bold">رصيد اول المدة</legend>
          <div className="flex mt-[5px] pr-[7px] text-[12px] leading-4 font-bold">
            <label className="w-[101px] flex gap-[7px]">
              <input type="radio" name="side" checked={side === 'credit'} onChange={() => setSide('credit')} className="appearance-none size-[13px] rounded-full border border-[#333] checked:bg-[#333] checked:shadow-[inset_0_0_0_2px_white]" />
              دائن
            </label>
            <label className="flex gap-[7px]">
              <input type="radio" name="side" checked={side === 'debit'} onChange={() => setSide('debit')} className="appearance-none size-[13px] rounded-full border border-[#333] checked:bg-[#333] checked:shadow-[inset_0_0_0_2px_white]" />
              مدين
            </label>
          </div>
          <label htmlFor="opening" className="block mt-5 mr-[11px] text-[12px] leading-5 font-bold">رصيد اول المدة</label>
          <input id="opening" defaultValue="0.000" className="block mr-[7px] w-[177px] h-[23px] border border-[#7a7a7a] bg-white px-[3px] text-[14px] font-bold outline-none" />
        </fieldset>

        {/* actions */}
        <div className="flex flex-col gap-px">
          <button type="button" className={actionButton}>جديد<NewPage size={24} /></button>
          <button type="button" className={actionButton}>حفظ<Floppy size={24} /></button>
          <button type="button" className={actionButton}>حذف<DeletePage size={24} /></button>
          <button type="button" className={actionButton}>خروج<RedX size={22} color="#f01c1c" edge="#3b0505" /></button>
        </div>
      </form>

      {/* search */}
      <div className="flex items-end mt-[6px] pl-[9px] pr-[6px] text-[13px]">
        <div className="w-[247px] pb-[2px] ml-[6px]">
          <label htmlFor="search" className="block pr-[3px] leading-5 h-[30px]">بحث</label>
          <input id="search" className="w-full h-[30px] border border-black bg-[#f4f4f4] outline-none px-1" />
        </div>
        <div className="w-[121px]">
          <label htmlFor="scope" className="block pr-[7px] leading-5 h-[30px]">مجال البحث</label>
          <Combo id="scope" value="اسم العميل" options={['اسم العميل', 'رقم العميل']} className="w-[121px] h-[31px]" selectClass="bg-[#e1e1e1] border-[#adadad] text-[15px]" />
        </div>
        <button type="button" aria-label="بحث" className="mr-auto w-[63px] h-[51px] bg-[#dcdcdc] border border-[#a6a6a6] flex items-center justify-center">
          <TableSearch size={32} flip />
        </button>
      </div>

      {/* customers list */}
      <div className="mt-[6px] ml-[2px] mr-[6px] h-[274px] border border-black flex overflow-hidden">
        <div className="flex-1 h-full overflow-hidden border-t border-[#a0a0a0]">
          <table className="w-full table-fixed border-collapse text-center">
            <thead>
              <tr className="h-[50px] bg-[#d3d3d3]">
                <th className={`w-[74px] ${th}`}>رقم العميل</th>
                <th className={th}>الاسم</th>
                <th className={`w-[146px] ${th}`}>اجمالي الدائن</th>
                <th className={`w-[146px] ${th}`}>اجمالي المدين</th>
                <th className={`w-[146px] ${th}`}>الرصيد</th>
                <th className="w-[99px] pl-0 pr-0 font-normal text-[15px]">النوع</th>
              </tr>
            </thead>
            <tbody className="font-bold text-[13px]">
              {CUSTOMERS.map(c => (
                <tr key={c.id} className="h-[25px] border-t border-[#a0a0a0] even:bg-[#faebd7]">
                  <td className={amount}>{c.id}</td>
                  <td className="border-l border-[#a0a0a0]">{c.name}</td>
                  <td className={amount}>{c.credit}</td>
                  <td className={amount}>{c.debit}</td>
                  <td className={`${amount} ${balanceColor(c.balance)}`}>{c.balance}</td>
                  <td>عميل</td>
                </tr>
              ))}
            </tbody>
          </table>
        </div>
        <div className="w-[17px] bg-[#f0f0f0] flex flex-col items-center text-[#555]">
          <ChevronUp size={12} strokeWidth={3} className="my-[3px]" />
          <div className="w-[15px] h-[17px] bg-[#cdcdcd]" />
          <ChevronDown size={12} strokeWidth={3} className="mt-auto mb-[3px]" />
        </div>
      </div>

      <div dir="ltr" className="flex gap-[5px] mt-[6px] mb-1 pl-3">
        <button type="button" dir="rtl" className="w-[147px] h-[33px] border border-black flex items-center pr-3 gap-1 text-[11px] font-bold">
          عرض كشف حساب<EyeSearch size={26} heavy />
        </button>
        <button type="button" dir="rtl" className="w-[147px] h-[33px] border border-black flex items-center justify-center gap-1 text-[12px]">
          الى EXCEL<ExcelPage size={22} />
        </button>
      </div>
    </section>
  );
};

/* ---------- taskbar ---------- */

const TASKS = [
  {
    name: 'Keys', icon: (
      <Svg size={26}>
        <text x="0" y="17" fontSize="19" fontWeight="700" fill="#7d6108" fontFamily="Liberation Sans">M</text>
        <text x="16" y="30" fontSize="20" fontWeight="700" fill="#e9c34c" fontFamily="Liberation Sans">S</text>
        <circle cx="15" cy="7" r="4.500" fill="none" stroke="#e4b13c" strokeWidth="3" />
        <path d="M15 11v18M15 22h-4M15 27h-4" stroke="#e4b13c" strokeWidth="3" />
      </Svg>
    ),
  },
  {
    name: 'C', icon: (
      <Svg size={25}>
        <circle cx="16" cy="16" r="15" fill="#a53a83" />
        <text x="16" y="24" fontSize="23" fontWeight="700" textAnchor="middle" fill="#fff" fontFamily="Liberation Sans">C</text>
      </Svg>
    ),
  },
  { name: 'Opera', icon: <Svg size={25}><ellipse cx="16" cy="16" rx="10.500" ry="12" fill="none" stroke="#e0202c" strokeWidth="6" /><path d="M22 4c5 4 7 8 7 12s-2 8-7 12" fill="none" stroke="#a70f18" strokeWidth="3" /></Svg> },
  {
    name: 'Microsoft 365', icon: (
      <Svg size={25}>
        <path d="M17 1L5 8v14l6 4V15l7-4 4 3z" fill="#7cc7f2" />
        <path d="M17 1l11 7v9l-10-6z" fill="#4f6fdc" />
        <path d="M28 12v11l-12 8-11-8 7-1 9-6z" fill="#6a55c9" />
        <path d="M5 22l11 9v-9l-5-3z" fill="#a98be8" />
      </Svg>
    ),
  },
  {
    name: 'Chrome', icon: (
      <Svg size={26}>
        <circle cx="16" cy="16" r="15" fill="#f9c61d" />
        <path d="M3 8.500A15 15 0 0129 8.500H16l-6.500 11z" fill="#dd3b2d" />
        <path d="M3 8.500A15 15 0 0015 31l7-12-12 1z" fill="#23984b" />
        <circle cx="16" cy="16" r="7.500" fill="#fff" /><circle cx="16" cy="16" r="5.800" fill="#3a7de8" />
      </Svg>
    ),
  },
  {
    name: 'Edge', icon: (
      <Svg size={25}>
        <circle cx="16" cy="16" r="15" fill="#1673c8" />
        <path d="M1 15C2 5 10 1 17 1c8 0 14 6 14 12 0 5-4 7-8 7-3 0-4-1-3-4 0-4-5-7-11-5-4 1-7 3-8 4z" fill="#2fbfc0" />
        <path d="M20 2c7 2 11 7 11 11 0 5-4 7-8 7-2 0-4-1-3-3 8-2 6-12 0-15z" fill="#65d95a" />
        <path d="M12 15c-2 8 4 14 14 12-4 5-14 6-19 0-4-5-1-10 5-12z" fill="#0c4a94" />
      </Svg>
    ),
  },
  { name: 'Tasameem', icon: <AppBadge />, open: true, active: true },
  { name: 'Mail', icon: <Svg size={25}><path d="M0 12L16 1l16 11v17H0z" fill="#0c4f94" /><path d="M3 11h26v10H3z" fill="#f5f7f9" /><path d="M0 12l16 11 16-11v18H0z" fill="#2da3e6" /><path d="M0 30l16-11 16 11z" fill="#56c3f5" /></Svg> },
  { name: 'Explorer', icon: <Svg size={25}><path d="M2 5h11l3 3h14v21H2z" fill="#e8a81e" /><path d="M2 10h28v18H2z" fill="#fbd668" /><path d="M7 20h18v9h-5v-4h-8v4H7z" fill="#3f94cf" /></Svg>, open: true },
  {
    name: 'Chrome profile', open: true, icon: (
      <Svg size={26}>
        <circle cx="15" cy="15" r="14" fill="#f9c61d" />
        <path d="M3 8A14 14 0 0127 8H15L9 18z" fill="#dd3b2d" />
        <path d="M3 8a14 14 0 0011 21l7-11-11 1z" fill="#23984b" />
        <circle cx="15" cy="15" r="6.500" fill="#3a7de8" stroke="#fff" strokeWidth="2" />
        <circle cx="24" cy="23" r="8" fill="#c9cfd6" /><circle cx="24" cy="20" r="4" fill="#c48b66" />
        <path d="M19 19c0-6 10-6 10 0-3-3-7-3-10 0z" fill="#16120f" /><path d="M17 30c2-7 12-7 14 0z" fill="#1f2c58" />
      </Svg>
    ),
  },
  { name: 'Monitor', icon: <Svg size={25}><path d="M8 5l21 1-2 17-20-2z" fill="#f1f1f1" stroke="#8c8c8c" /><path d="M11 9l15 1-1 9-14-1z" fill="#cfe6f7" /><path d="M11 17l4-5 3 5 3-6 4 6" fill="none" stroke="#2d6fae" /><path d="M1 12h6v14H1zM14 22h8l2 7H12z" fill="#b9b9b9" /></Svg>, open: true },
  { name: 'Calculator', icon: <Svg size={25}><path d="M5 1h23v30H5z" fill="#6c7680" /><path d="M7 3h19v6H7z" fill="#55d3f4" /><path d="M7 12h5v4H7zM14 12h5v4h-5zM21 12h5v4h-5zM7 18h5v4H7zM14 18h5v4h-5zM7 24h5v5H7zM14 24h5v5h-5z" fill="#d4dade" /><path d="M21 18h5v11h-5z" fill="#1b4a8c" /></Svg>, open: true },
  { name: 'Control', icon: <Svg size={24}><path d="M1 5h30v23H1z" fill="#3fa7e0" /><path d="M3 7h26v19H3z" fill="#bfe6fb" /><circle cx="10" cy="14" r="5" fill="#2b7cc0" /><path d="M10 14V9a5 5 0 015 5z" fill="#f6b73c" /><path d="M18 10h9M18 14h9M18 18h9M6 23h12" stroke="#2b7cc0" strokeWidth="2" /></Svg>, open: true },
  { name: 'Tasameem 2', icon: <AppBadge />, open: true },
  { name: 'Word', icon: <Svg size={25}><path d="M12 2h18v26H12z" fill="#f6f8fb" /><path d="M2 2h20v26H2z" fill="#2f66b5" /><text x="12" y="22" fontSize="18" fontWeight="700" textAnchor="middle" fill="#fff" fontFamily="Liberation Serif">W</text><path d="M24 8h5M24 12h5M24 16h5" stroke="#7ca3d8" strokeWidth="1.500" /></Svg>, open: true },
  { name: 'Paint', icon: <Svg size={26}><path d="M2 19C2 9 12 5 20 8c8 3 9 11 4 13-4 1-5 2-3 6-6 4-19 3-19-8z" fill="#cfe4f2" stroke="#7fa3bd" /><circle cx="9" cy="15" r="2.300" fill="#e8473b" /><circle cx="15" cy="12" r="2.300" fill="#59b947" /><circle cx="8" cy="21" r="2.300" fill="#3d7bd0" /><circle cx="21" cy="13" r="2.300" fill="#f3b92e" /><path d="M28 2L19 29" stroke="#d98a35" strokeWidth="3" /><path d="M26 1l5 2-2 6-4-1z" fill="#b08d63" /></Svg>, open: true },
];

const Taskbar = () => (
  <footer dir="ltr" className="h-[43px] flex bg-linear-to-r from-[#1b1c22] from-55% via-[#1b2c42] via-65% to-[#1b1c22] to-85% text-white font-['Open_Sans','Noto_Sans',sans-serif]">
    <button type="button" aria-label="Start" className="w-12 flex items-center justify-center">
      <svg width="17" height="17" viewBox="0 0 17 17" fill="#fff"><path d="M0 2.500l7-1V8H0zM8 1.300L17 0v8H8zM0 9h7v6.500l-7-1zM8 9h9v8l-9-1.300z" /></svg>
    </button>
    <div className="w-72 bg-[#f2f2f2] flex items-center overflow-hidden">
      <svg width="18" height="18" viewBox="0 0 18 18" fill="none" stroke="#222" strokeWidth="1.400" className="ml-3 shrink-0"><circle cx="11" cy="7" r="5.500" /><path d="M7 11l-6 6" /></svg>
      <input aria-label="Search" placeholder="Type here to search" className="ml-[10px] w-[168px] text-[15px] outline-none bg-transparent placeholder:text-[#333]" />
      <svg width="80" height="43" viewBox="0 0 80 43" className="shrink-0" aria-hidden="true">
        <path d="M0 43C2 18 26 6 80 9v34z" fill="#4fc0f2" />
        <ellipse cx="42" cy="25" rx="31" ry="14" fill="#5fd0f6" />
        <path d="M12 30c-4-8 4-14 16-16l2 4c-9 2-14 6-12 10zM36 13c12-3 28 0 36 7 3 5 2 10-1 11-1-8-16-14-34-13zM28 37c3-4 8-5 12-1l-2 5-9 1zM48 36c4-5 9-6 13-2l-3 5-9 1z" fill="#f3dfbd" />
        <ellipse cx="42" cy="26" rx="25" ry="9" fill="#1f86b8" />
        <ellipse cx="42" cy="26" rx="17" ry="5" fill="#166c9e" />
        <path d="M15 21l7-4 2 4-7 4zM42 13l8 0v4h-8zM68 19l6 2 1 5-5-3zM31 37l7 0 0 4-8 1zM52 34l7-2 1 5-6 1z" fill="#2e8a3d" />
      </svg>
    </div>
    <div className="w-[22px] flex items-center gap-[2px] pl-[6px]">
      <span className="w-px h-4 bg-[#55575c]" /><span className="w-px h-4 bg-[#55575c]" />
    </div>
    <nav className="flex">
      {TASKS.map(t => (
        <button key={t.name} type="button" aria-label={t.name} className={`w-[49px] px-[3px] flex flex-col items-center ${t.active ? 'bg-[#48494f]' : ''}`}>
          <span className="flex-1 flex items-center">{t.icon}</span>
          <span className={`w-full h-[2px] ${t.open ? 'bg-[#76b9ed]' : ''}`} />
        </button>
      ))}
    </nav>
    <div className="ml-auto flex items-center">
      <span className="w-px h-4 bg-[#55575c] mr-[2px]" /><span className="w-px h-4 bg-[#55575c]" />
      <span className="ml-[13px] text-[12px]">AR</span>
      <ChevronUp size={16} strokeWidth={1.5} className="ml-[14px]" />
      <svg width="18" height="18" viewBox="0 0 18 18" fill="none" stroke="#fff" strokeWidth="1.200" className="ml-2"><path d="M1 3l14-2v13L1 16zM6 8c1-3 4-3 5-1M11 9c-1 3-4 3-5 1" /><circle cx="13" cy="13" r="4" fill="#ff9a1a" stroke="none" /></svg>
      <svg width="18" height="16" viewBox="0 0 18 16" fill="none" stroke="#fff" strokeWidth="1.200" className="ml-[6px]"><path d="M5 3h12v8H5M10 11v3M7 14.500h7M1 1h4v4H1zM3 5v9" /></svg>
      <svg width="24" height="14" viewBox="0 0 24 14" fill="none" stroke="#fff" className="ml-[6px]"><path d="M.5.500h23v13H.5z" /><path d="M3 4h18M3 7h18M6 10.500h12" strokeDasharray="1.500 1.500" /></svg>
      <div className="ml-[6px] w-[66px] text-center text-[12px] leading-[18px]">
        <div>10:43 PM</div>
        <div>2024/08/26</div>
      </div>
      <button type="button" aria-label="Notifications" className="relative ml-3 mr-[6px] w-8 h-6">
        <svg width="18" height="18" viewBox="0 0 18 18" fill="#fff"><path d="M0 0h17v13H7l-4 4v-4H0z" /><path d="M3 4h11M3 7h11M3 10h7" stroke="#1b1c22" /></svg>
        <span className="absolute left-[9px] top-[7px] size-4 rounded-full bg-[#33353a] border border-[#8a8c90] text-[11px] leading-[14px]">3</span>
      </button>
      <span className="self-stretch w-px bg-[#6a6c70] mr-[2px]" />
    </div>
  </footer>
);

const StatusBar = () => (
  <div dir="ltr" className="h-[30px] bg-[#34495e] border-t border-white text-white text-[12px] flex items-center gap-[2px] pl-[18px]">
    <span className="h-6 w-[37px] flex items-center justify-center border-2 border-t-white border-l-white border-[#a0a0a0] text-[11px] text-[#6b7680]">CAPS</span>
    <span className="h-6 w-[36px] flex items-center justify-center border-2 border-t-white border-l-white border-[#a0a0a0]">NUM</span>
    <span className="h-6 w-[45px] flex items-center justify-center border-2 border-[#d8d8d8]">التاريخ:</span>
    <span className="ml-1 w-[126px] whitespace-nowrap text-[11px]">2024/08/26 10:43:56 PM</span>
    <span className="ml-[6px] text-[13px]">اسم المستخدم</span>
    <span className="ml-[2px] text-[13px]">admin</span>
  </div>
);

export default function App() {
  return (
    <div dir="rtl" className="min-h-screen flex flex-col bg-white text-black overflow-hidden font-['DejaVu_Sans_Condensed','DejaVu_Sans',sans-serif]">
      <header dir="ltr" className="h-[23px] flex items-center justify-between pl-[2px]">
        <div className="flex items-center gap-[6px] text-[11px] text-[#777]"><AppBadge size={16} />.</div>
        <WindowButtons restore className="h-full text-[#888]" />
      </header>

      <nav className="h-[34px] pb-[2px] bg-[#34495e] text-white flex">
        {MENU.map(item => (
          <button key={item.label} type="button" className={`${item.width} text-[14px] font-bold whitespace-nowrap flex justify-center items-center`}>{item.label}</button>
        ))}
      </nav>

      <div className="h-[52px] bg-[#252f3b] text-white flex">
        <div className="w-[7px] my-1 border-r-2 border-dotted border-white" />
        {TOOLBAR.map(({ label, width, icon: Icon }) => (
          <button key={label} type="button" className={`${width} flex flex-col items-center pt-1 gap-[2px] text-[14px] leading-5 whitespace-nowrap`}>
            <Icon size={20} />
            {label}
          </button>
        ))}
      </div>

      <div dir="ltr" className="flex-1 flex border-t-2 border-[#a0a0a0]">
        <Sidebar />
        <main dir="rtl" className="relative flex-1 border-l-2 border-[#696969] bg-white">
          <div className="w-[502px] grid grid-cols-3 pt-[3px]">
            {SHORTCUTS.map(s => (
              <button key={s.label} type="button" className="h-20 flex flex-col items-center gap-1 text-[16px] whitespace-nowrap">
                {s.icon}
                <span className={`h-7 px-px leading-6 ${s.active ? 'bg-[#eeeeee]' : ''}`}>{s.label}</span>
              </button>
            ))}
          </div>
          <CustomersDialog />
        </main>
      </div>

      <StatusBar />
      <Taskbar />
    </div>
  );
}
